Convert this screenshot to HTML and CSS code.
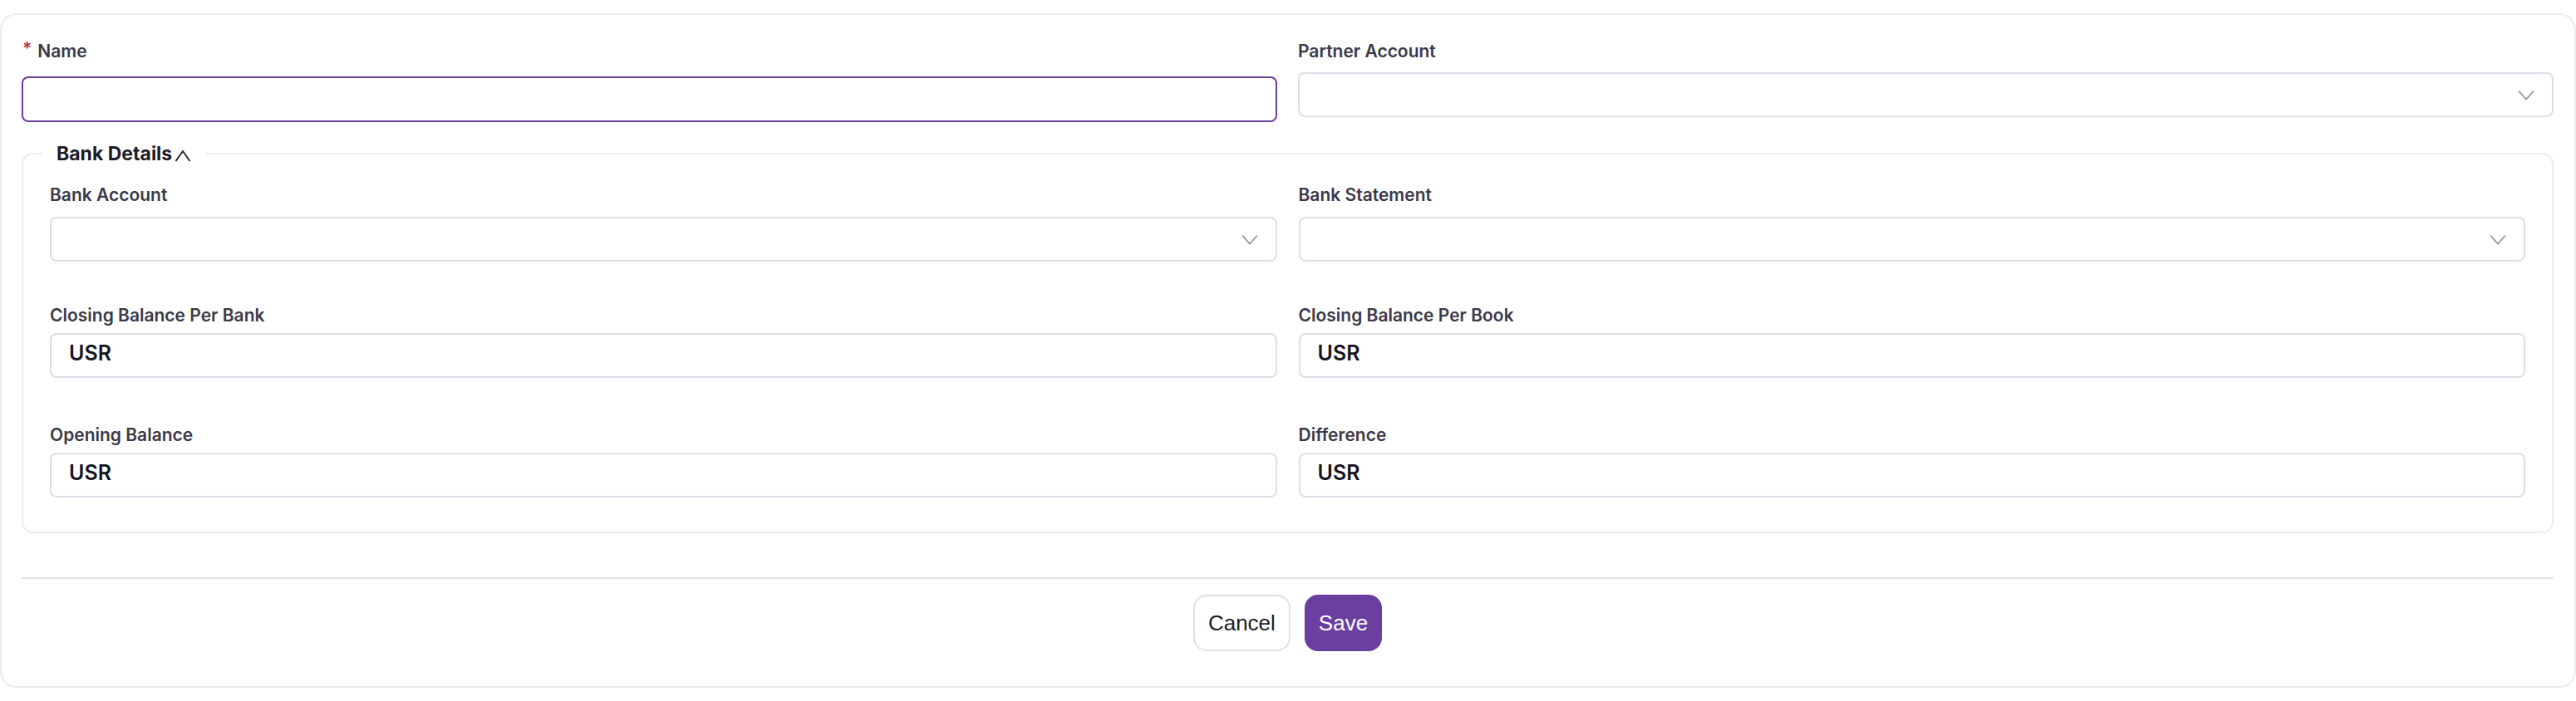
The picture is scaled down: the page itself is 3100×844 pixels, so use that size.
FILE: index.html
```html
<!DOCTYPE html>
<html lang="en">
<head>
    <meta charset="UTF-8">
    <meta name="viewport" content="width=device-width, initial-scale=1.0">
    <title>Bank Reconciliation</title>
    <link rel="stylesheet" href="styles.css">
</head>
<body>
    <form class="card" onsubmit="return false">
        <div class="form-grid">
            <div class="field field-name">
                <label class="label" for="name"><span class="required">*</span>Name</label>
                <input class="text-input is-focused" type="text" id="name" name="name">
            </div>
            <div class="field field-select">
                <label class="label">Partner Account</label>
                <div class="select">
                    <svg class="chevron" width="20" height="13" viewBox="0 0 20 13"><path d="M1 1.5 L10 11.5 L19 1.5" /></svg>
                </div>
            </div>
        </div>

        <fieldset class="group">
            <legend class="group-title">Bank Details
                <svg class="caret" width="20" height="15" viewBox="0 0 20 15"><path d="M1.5 14 L10 2 L18.5 14" /></svg>
            </legend>
            <div class="group-grid">
                <div class="field field-select">
                    <label class="label">Bank Account</label>
                    <div class="select">
                        <svg class="chevron" width="20" height="13" viewBox="0 0 20 13"><path d="M1 1.5 L10 11.5 L19 1.5" /></svg>
                    </div>
                </div>
                <div class="field field-select">
                    <label class="label">Bank Statement</label>
                    <div class="select">
                        <svg class="chevron" width="20" height="13" viewBox="0 0 20 13"><path d="M1 1.5 L10 11.5 L19 1.5" /></svg>
                    </div>
                </div>
                <div class="field field-money">
                    <label class="label">Closing Balance Per Bank</label>
                    <div class="money-input"><span class="currency">USR</span></div>
                </div>
                <div class="field field-money">
                    <label class="label">Closing Balance Per Book</label>
                    <div class="money-input"><span class="currency">USR</span></div>
                </div>
                <div class="field field-money">
                    <label class="label">Opening Balance</label>
                    <div class="money-input"><span class="currency">USR</span></div>
                </div>
                <div class="field field-money">
                    <label class="label">Difference</label>
                    <div class="money-input"><span class="currency">USR</span></div>
                </div>
            </div>
        </fieldset>

        <div class="divider"></div>

        <div class="actions">
            <button type="button" class="btn btn-cancel">Cancel</button>
            <button type="submit" class="btn btn-save">Save</button>
        </div>
    </form>
</body>
</html>
```

FILE: styles.css
```css
body {
    margin: 0;
    padding: 16px 0;
    background: #ffffff;
    font-family: Inter, 'Noto Sans', sans-serif;
}

.card {
    border: 2px solid #ebeaf0;
    border-radius: 20px;
    padding: 30px 25px 42px 24px;
    background: #ffffff;
}

.form-grid {
    display: grid;
    grid-template-columns: 1fr 1fr;
    column-gap: 25px;
    align-items: start;
}

.label {
    display: block;
    font-size: 21px;
    line-height: 28px;
    font-weight: 600;
    color: #3b3949;
}

.required {
    color: #b5323f;
    margin-right: 7px;
    margin-left: 1px;
    vertical-align: 3px;
    line-height: 0;
}

.field-name .label {
    margin-bottom: 16px;
}

.field-select .label {
    margin-bottom: 11px;
}

.group-grid .field-select .label {
    margin-bottom: 12px;
}

.field-money .label {
    margin-bottom: 7px;
}

.text-input,
.select,
.money-input {
    box-sizing: border-box;
    display: block;
    width: 100%;
    height: 54px;
    border: 2px solid #dedce8;
    border-radius: 8px;
    background: #ffffff;
    margin: 0;
}

.text-input {
    height: 55px;
    padding: 0 20px;
    font-family: inherit;
    font-size: 22px;
    outline: none;
}

.text-input.is-focused {
    border-color: #6a3e9f;
}

.select {
    display: flex;
    align-items: center;
    justify-content: flex-end;
    padding: 0 21px 0 20px;
}

.chevron path {
    fill: none;
    stroke: #8d8a9b;
    stroke-width: 1.6;
}

.money-input {
    display: flex;
    align-items: center;
    padding: 0 20px 6px 21px;
}

.currency {
    font-size: 25px;
    font-weight: 600;
    color: #16151f;
}

.group {
    margin: 24px 0 0;
    padding: 22px 32px 41px;
    border: 2px solid #ebeaf0;
    border-radius: 14px;
    min-width: 0;
}

.group-title {
    margin-left: -9px;
    padding: 0 18px 0 17px;
    font-size: 23px;
    line-height: 28px;
    font-weight: 700;
    color: #1c1b27;
}

.caret {
    margin-left: -3px;
    vertical-align: -2px;
}

.caret path {
    fill: none;
    stroke: #1c1b27;
    stroke-width: 1.8;
}

.group-grid {
    display: grid;
    grid-template-columns: 1fr 1fr;
    column-gap: 26px;
}

.group-grid .field-select {
    margin-bottom: 51px;
}

.group-grid .field-money {
    margin-bottom: 55px;
}

.group-grid .field:nth-last-child(-n+2) {
    margin-bottom: 0;
}

.divider {
    height: 2px;
    background: #e3e2ea;
    margin-top: 53px;
}

.actions {
    display: flex;
    justify-content: center;
    gap: 17px;
    margin-top: 19px;
}

.btn {
    height: 68px;
    padding: 0 16px;
    border: 2px solid #e0dfe8;
    border-radius: 16px;
    font-family: 'Liberation Sans', Arial, sans-serif;
    font-size: 26px;
    cursor: pointer;
}

.btn-cancel {
    background: #ffffff;
    color: #1c1b26;
}

.btn-save {
    background: #6b3fa0;
    border-color: #6b3fa0;
    color: #ffffff;
    padding: 0 15px;
}
```
